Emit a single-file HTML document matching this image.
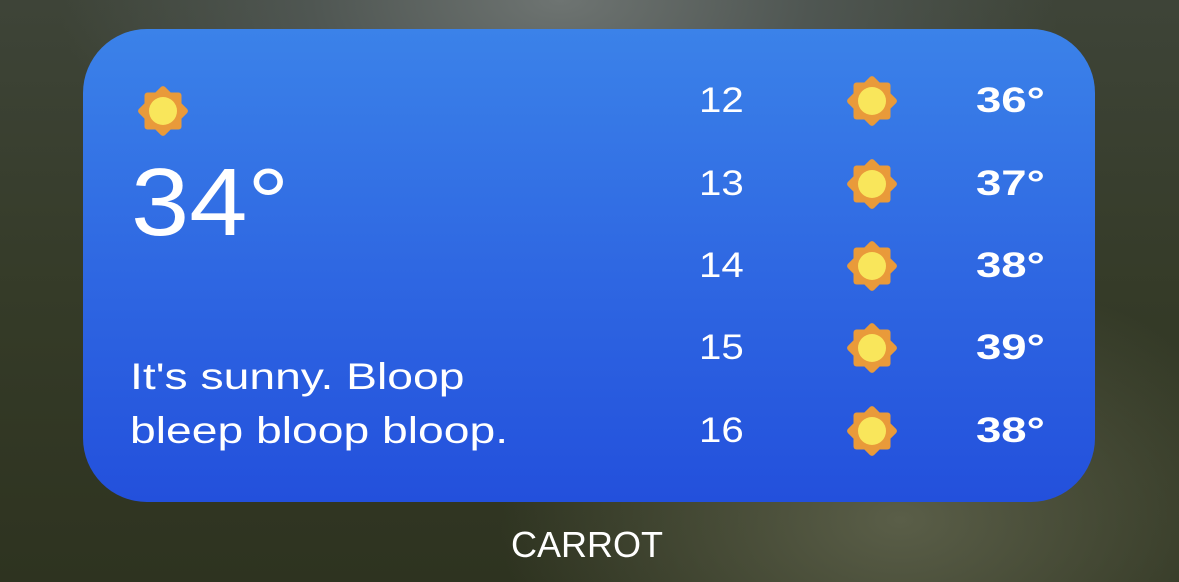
<!DOCTYPE html>
<html><head><meta charset="utf-8"><style>
html,body{margin:0;padding:0;width:1179px;height:582px;overflow:hidden;font-family:"Liberation Sans",sans-serif;}
body{background:radial-gradient(ellipse 500px 250px at 560px 0px,#6e7472 0%,#4f5652 50%,transparent 100%),radial-gradient(ellipse 400px 250px at 900px 520px,#5a5e48 0%,transparent 100%),linear-gradient(180deg,#3e4438 0%,#353b28 50%,#2e3320 100%);position:relative;}
.w{position:absolute;left:83px;top:29px;width:1012px;height:473px;border-radius:64px;background:linear-gradient(180deg,#3b82e9 0%,#2f68e2 50%,#2350dc 100%);}
.t{position:absolute;color:#fff;white-space:nowrap;transform-origin:0 0;}
svg{position:absolute;}
</style></head><body>
<svg width="0" height="0"><defs><g id="sun"><rect x="-18.5" y="-18.5" width="37" height="37" rx="3" fill="#e99a3a"/><rect x="-18.5" y="-18.5" width="37" height="37" rx="3" fill="#e99a3a" transform="rotate(45)"/><circle r="14" fill="#f9e65b"/></g></defs></svg>
<div class="w"></div>
<svg style="left:136px;top:84px" width="54" height="54" viewBox="-27 -27 54 54"><use href="#sun"/></svg>
<div class="t" style="left:131px;top:148px;font-size:96px;line-height:110px;transform:scaleX(1.09)">34°</div>
<div class="t" style="left:130px;top:350px;font-size:37px;line-height:54px;transform:scaleX(1.25)">It's sunny. Bloop<br>bleep bloop bloop.</div>
<div class="t" style="left:699px;top:80px;font-size:35px;line-height:42px;transform:scaleX(1.15)">12</div>
<div class="t" style="left:699px;top:163px;font-size:35px;line-height:42px;transform:scaleX(1.15)">13</div>
<div class="t" style="left:699px;top:245px;font-size:35px;line-height:42px;transform:scaleX(1.15)">14</div>
<div class="t" style="left:699px;top:327px;font-size:35px;line-height:42px;transform:scaleX(1.15)">15</div>
<div class="t" style="left:699px;top:410px;font-size:35px;line-height:42px;transform:scaleX(1.15)">16</div>
<svg style="left:845px;top:74px" width="54" height="54" viewBox="-27 -27 54 54"><use href="#sun"/></svg>
<svg style="left:845px;top:157px" width="54" height="54" viewBox="-27 -27 54 54"><use href="#sun"/></svg>
<svg style="left:845px;top:239px" width="54" height="54" viewBox="-27 -27 54 54"><use href="#sun"/></svg>
<svg style="left:845px;top:321px" width="54" height="54" viewBox="-27 -27 54 54"><use href="#sun"/></svg>
<svg style="left:845px;top:404px" width="54" height="54" viewBox="-27 -27 54 54"><use href="#sun"/></svg>
<div class="t" style="left:976px;top:80px;font-size:35px;line-height:42px;font-weight:bold;transform:scaleX(1.3)">36°</div>
<div class="t" style="left:976px;top:163px;font-size:35px;line-height:42px;font-weight:bold;transform:scaleX(1.3)">37°</div>
<div class="t" style="left:976px;top:245px;font-size:35px;line-height:42px;font-weight:bold;transform:scaleX(1.3)">38°</div>
<div class="t" style="left:976px;top:327px;font-size:35px;line-height:42px;font-weight:bold;transform:scaleX(1.3)">39°</div>
<div class="t" style="left:976px;top:410px;font-size:35px;line-height:42px;font-weight:bold;transform:scaleX(1.3)">38°</div>
<div class="t" style="left:0;width:1174px;text-align:center;top:524px;font-size:36px;line-height:42px;">CARROT</div>
</body></html>
